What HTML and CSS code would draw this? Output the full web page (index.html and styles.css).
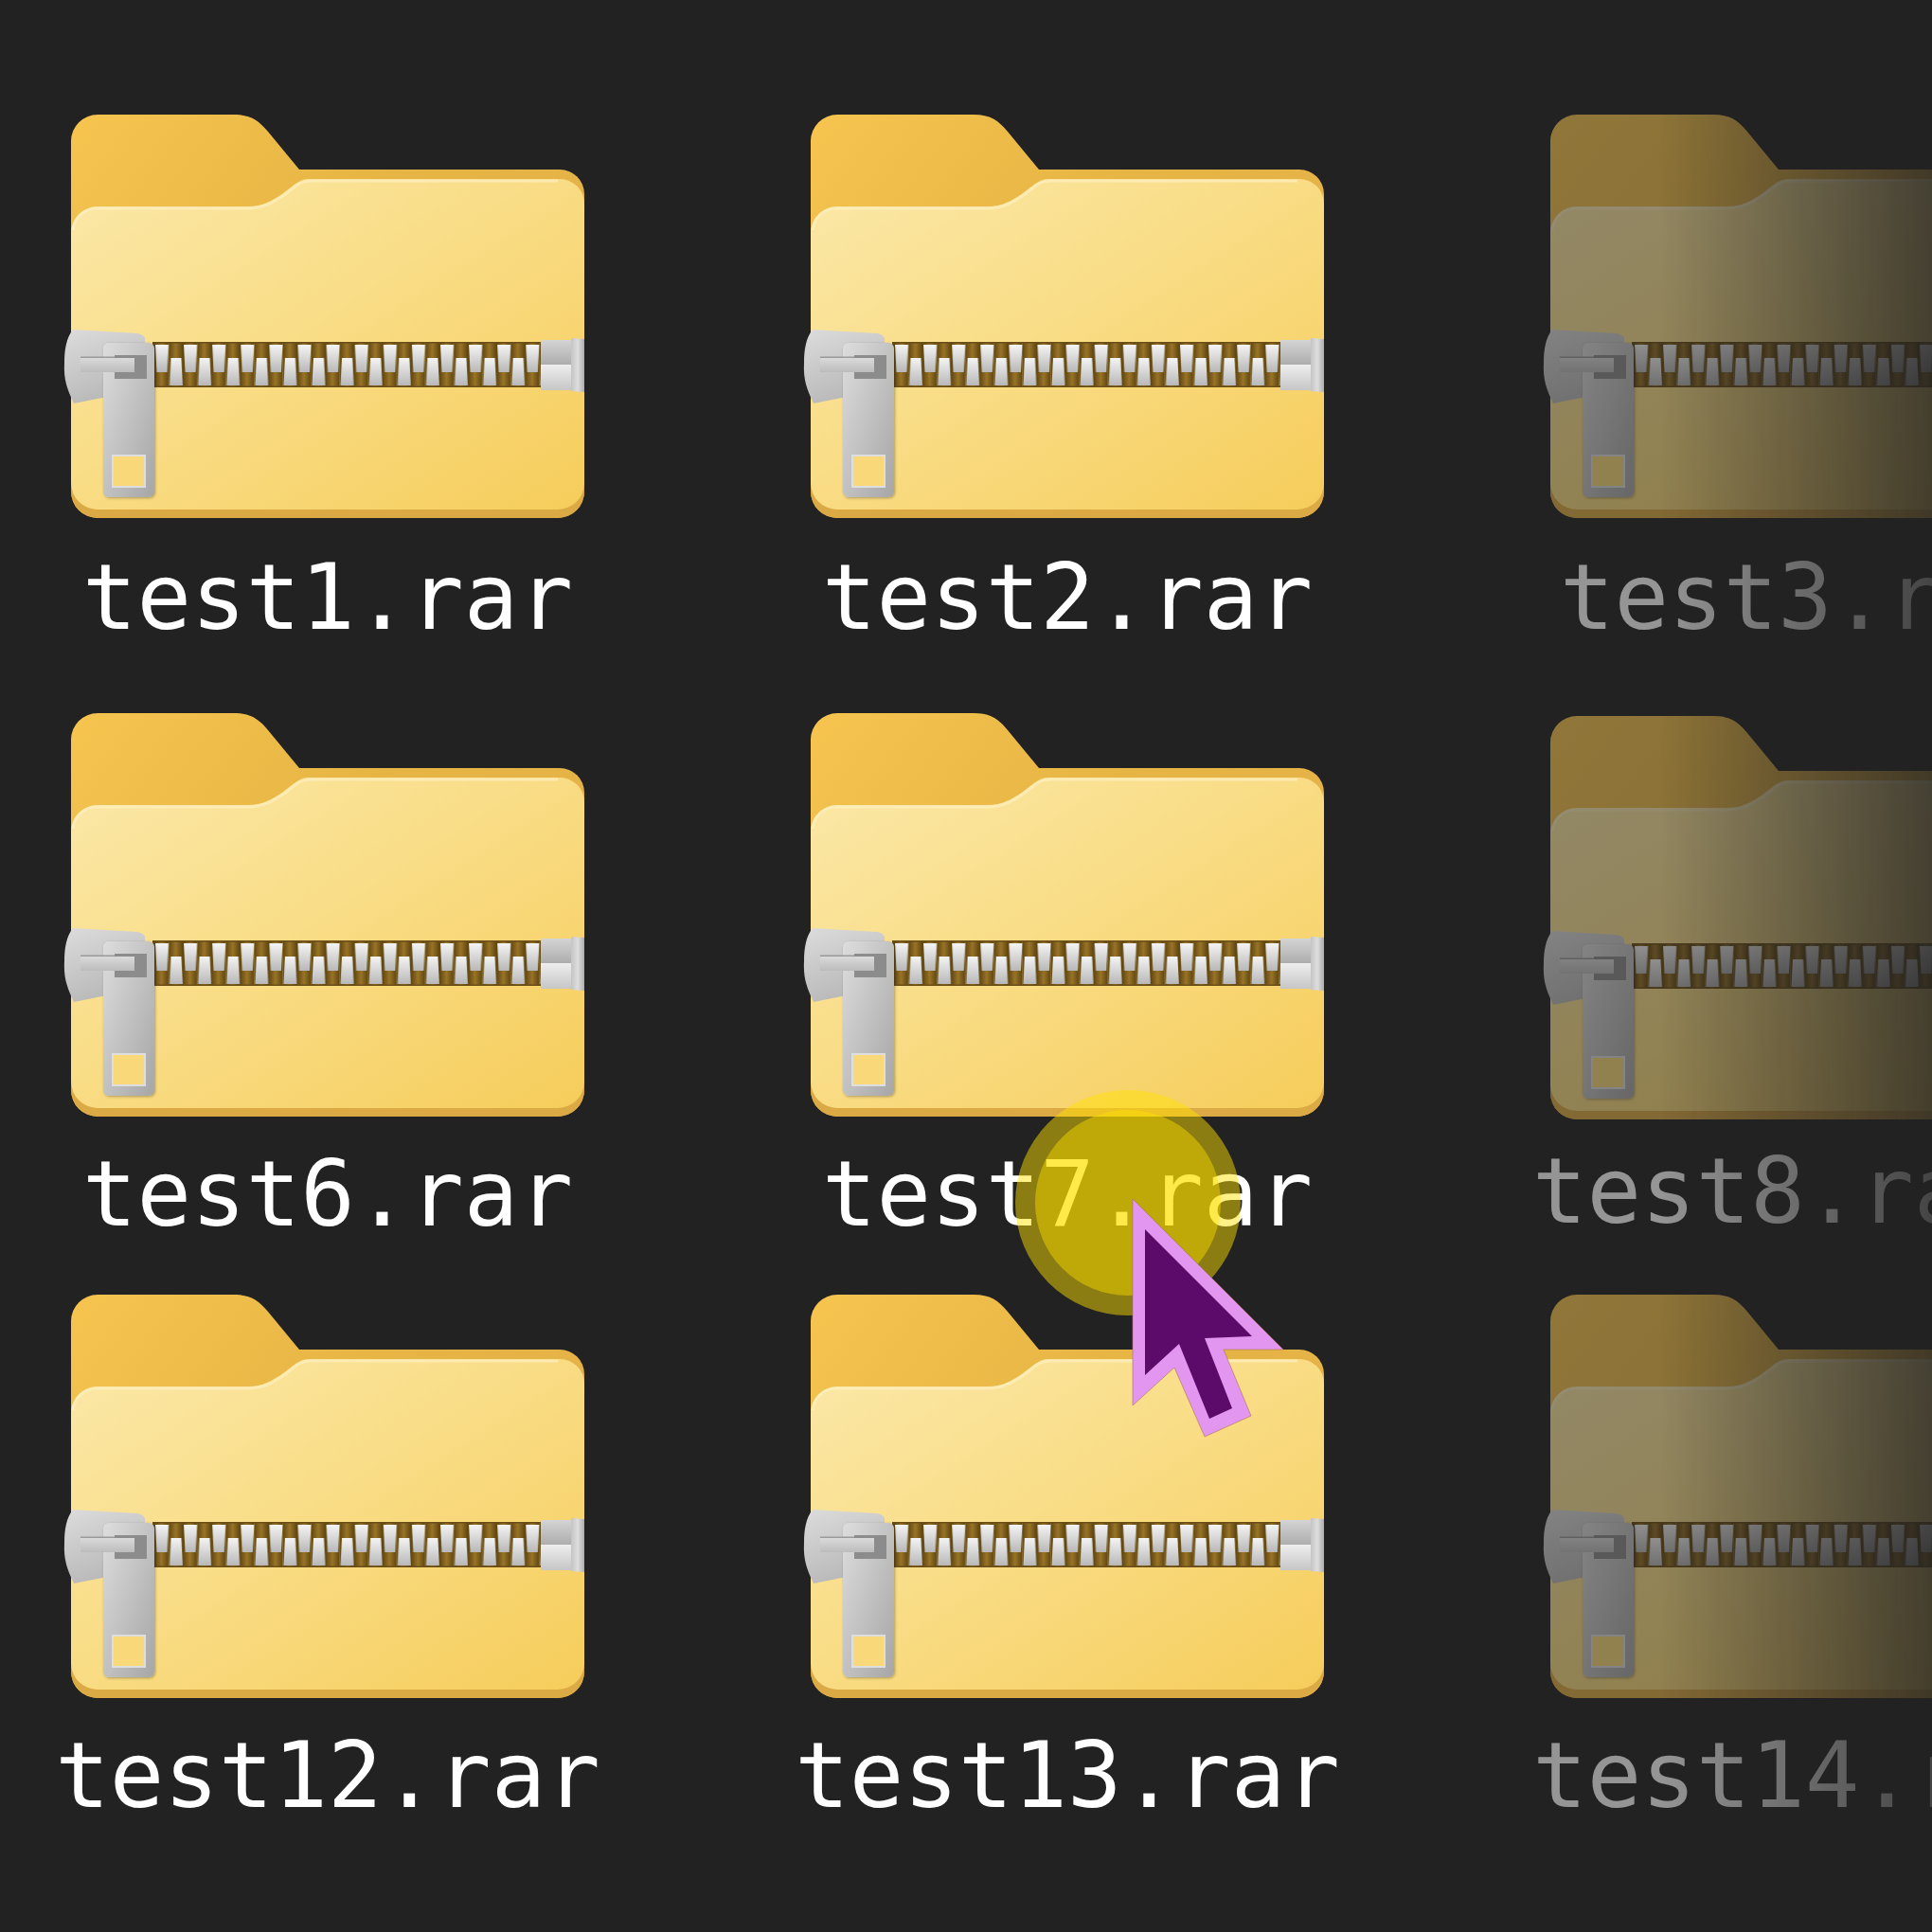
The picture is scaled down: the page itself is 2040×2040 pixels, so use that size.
FILE: index.html
```html
<!DOCTYPE html>
<html lang="en">
<head>
    <meta charset="UTF-8">
    <title>Archives</title>
    <link rel="stylesheet" href="styles.css">
</head>
<body>
    <svg class="defs" aria-hidden="true">
        <defs>
            <linearGradient id="backFill" x1="0" y1="0" x2="1" y2="0.6">
                <stop offset="0" stop-color="#f6c44f"/>
                <stop offset="0.5" stop-color="#e7b544"/>
                <stop offset="1" stop-color="#e3b148"/>
            </linearGradient>
            <linearGradient id="frontFill" x1="0" y1="0" x2="1" y2="1">
                <stop offset="0" stop-color="#fbe8a8"/>
                <stop offset="0.45" stop-color="#f9dd87"/>
                <stop offset="1" stop-color="#f6cd5b"/>
            </linearGradient>
            <linearGradient id="toothDown" x1="0" y1="0" x2="0" y2="1">
                <stop offset="0" stop-color="#f4f4f4"/>
                <stop offset="1" stop-color="#b8b8b8"/>
            </linearGradient>
            <linearGradient id="gap" x1="0" y1="0" x2="1" y2="0">
                <stop offset="0" stop-color="#5f450f"/>
                <stop offset="0.5" stop-color="#997428"/>
                <stop offset="1" stop-color="#5f450f"/>
            </linearGradient>
            <linearGradient id="metal" x1="0" y1="0" x2="1" y2="1">
                <stop offset="0" stop-color="#dddddd"/>
                <stop offset="1" stop-color="#a6a6a6"/>
            </linearGradient>
            <linearGradient id="bar" x1="0" y1="0" x2="0" y2="1">
                <stop offset="0" stop-color="#dadada"/>
                <stop offset="1" stop-color="#bcbcbc"/>
            </linearGradient>
            <linearGradient id="metalSide" x1="0" y1="0" x2="1" y2="0">
                <stop offset="0" stop-color="#c4c4c4"/>
                <stop offset="0.5" stop-color="#dedede"/>
                <stop offset="1" stop-color="#aeaeae"/>
            </linearGradient>
            <linearGradient id="stopTop" x1="0" y1="0" x2="0" y2="1">
                <stop offset="0" stop-color="#d4d4d4"/>
                <stop offset="1" stop-color="#adadad"/>
            </linearGradient>
            <linearGradient id="stopBottom" x1="0" y1="0" x2="0" y2="1">
                <stop offset="0" stop-color="#eeeeee"/>
                <stop offset="1" stop-color="#c6c6c6"/>
            </linearGradient>
            <linearGradient id="slider" x1="0" y1="0" x2="0.4" y2="1">
                <stop offset="0" stop-color="#dcdcdc"/>
                <stop offset="1" stop-color="#b8b8b8"/>
            </linearGradient>
            <filter id="pullShadow" x="-20%" y="-10%" width="140%" height="120%">
                <feDropShadow dx="1" dy="1" stdDeviation="1.5" flood-color="#000" flood-opacity="0.3"/>
            </filter>
            <pattern id="teeth" x="57.9" y="240" width="30.1" height="48" patternUnits="userSpaceOnUse">
                <rect width="15" height="48" fill="url(#gap)"/>
                <rect x="15" width="15.1" height="48" fill="url(#gap)"/>
                <path d="M1 3H15L13.5 32H2.5Z" fill="url(#toothDown)"/>
                <path d="M17.5 17H28.5L30 46H16Z" fill="url(#toothDown)"/>
            </pattern>
            <g id="rar">
                <path fill="url(#backFill)" d="M0 28A28 28 0 0 1 28 0H172C190 0 198 6 208 18L241 58H516A26 26 0 0 1 542 84V398A28 28 0 0 1 514 426H28A28 28 0 0 1 0 398Z"/>
                <path fill="#dcaa45" d="M0 390V398A28 28 0 0 0 28 426H514A28 28 0 0 0 542 398V390Z"/>
                <path fill="url(#frontFill)" d="M0 125A28 28 0 0 1 28 97H186C203 97 212 91 224 83C234 76 240 68 252 68H516A26 26 0 0 1 542 94V389A28 28 0 0 1 514 417H28A28 28 0 0 1 0 389Z"/>
                <path fill="none" stroke="#fdf0c0" stroke-width="3" stroke-opacity="0.7" d="M2 122A25 25 0 0 1 28 99H186C203 99 213 93 225 85C235 78 240 70 252 70H514"/>

                <rect x="86" y="240" width="411" height="48" fill="url(#teeth)"/>
                <rect x="86" y="240" width="411" height="1.5" fill="#6b4e16"/>
                <rect x="86" y="286.5" width="411" height="1.5" fill="#6b4e16"/>

                <path fill="url(#metalSide)" d="M528 236L542 237V293L528 292Z"/>
                <rect x="496" y="238" width="32" height="26" fill="url(#stopTop)"/>
                <rect x="496" y="264" width="32" height="27" fill="url(#stopBottom)"/>

                <path fill="url(#slider)" d="M2 227L70 231Q76 232 78 236V290L3 305C-4 290 -8 280 -7 262C-7 248 -5 236 2 227Z"/>
                <rect x="34" y="241" width="54" height="163" rx="6" fill="url(#metal)" filter="url(#pullShadow)"/>
                <rect x="46" y="254" width="34" height="25" fill="#8c8c8c"/>
                <rect x="10" y="257" width="57" height="15" fill="url(#bar)"/>
                <rect x="10" y="255.5" width="36" height="1.5" fill="#9a9a9a"/>
                <rect x="44" y="360" width="34" height="33" fill="#f8d878" stroke="#dedede" stroke-width="2"/>
            </g>
        </defs>
    </svg>

    <div class="grid">
        <div class="file">
            <svg class="icon" viewBox="0 0 542 426"><use href="#rar"/></svg>
            <div class="name">test1.rar</div>
        </div>
        <div class="file">
            <svg class="icon" viewBox="0 0 542 426"><use href="#rar"/></svg>
            <div class="name">test2.rar</div>
        </div>
        <div class="file fade">
            <svg class="icon" viewBox="0 0 542 426"><use href="#rar"/></svg>
            <div class="name">test3.rar</div>
        </div>
        <div class="file">
            <svg class="icon" viewBox="0 0 542 426"><use href="#rar"/></svg>
            <div class="name">test6.rar</div>
        </div>
        <div class="file">
            <svg class="icon" viewBox="0 0 542 426"><use href="#rar"/></svg>
            <div class="name">test7.rar</div>
        </div>
        <div class="file fade lagging">
            <svg class="icon" viewBox="0 0 542 426"><use href="#rar"/></svg>
            <div class="name">test8.rar</div>
        </div>
        <div class="file">
            <svg class="icon" viewBox="0 0 542 426"><use href="#rar"/></svg>
            <div class="name">test12.rar</div>
        </div>
        <div class="file">
            <svg class="icon" viewBox="0 0 542 426"><use href="#rar"/></svg>
            <div class="name">test13.rar</div>
        </div>
        <div class="file fade">
            <svg class="icon" viewBox="0 0 542 426"><use href="#rar"/></svg>
            <div class="name">test14.rar</div>
        </div>
    </div>

    <svg class="pointer" viewBox="0 0 2040 2040" aria-hidden="true">
        <circle class="halo" cx="1191" cy="1270" r="119"/>
        <circle class="halo-core" cx="1191" cy="1270" r="98"/>
        <path class="arrow-edge" d="M1196 1266V1484L1240 1444L1272 1517L1321 1495L1292 1425H1355Z"/>
        <path class="arrow-fill" d="M1209 1298V1452L1245 1419L1277 1498L1301 1487L1272 1413L1322 1411Z"/>
    </svg>
</body>
</html>
```

FILE: styles.css
```css
html, body {
    margin: 0;
    padding: 0;
    height: 100%;
}

body {
    position: relative;
    background: #222222;
    overflow: hidden;
    font-family: "DejaVu Sans Mono", "Liberation Mono", monospace;
}

.defs {
    position: absolute;
    width: 0;
    height: 0;
}

.grid {
    display: grid;
    grid-template-columns: repeat(3, 692px);
    grid-template-rows: 632px 614px 560px;
    column-gap: 89px;
    padding-top: 121px;
}

.file {
    display: flex;
    flex-direction: column;
    align-items: center;
}

.icon {
    display: block;
    width: 542px;
    height: 426px;
    overflow: visible;
    filter: blur(0.5px);
}

.name {
    margin-top: 26px;
    font-size: 95.6px;
    line-height: 112px;
    color: #fff;
    white-space: nowrap;
}

.file:nth-child(-n+3) .name {
    margin-top: 28px;
}

.fade {
    -webkit-mask-image: linear-gradient(to right, rgba(0, 0, 0, 0.52) 190px, rgba(0, 0, 0, 0.16) 478px);
    mask-image: linear-gradient(to right, rgba(0, 0, 0, 0.52) 190px, rgba(0, 0, 0, 0.16) 478px);
}

.fade .name {
    margin-right: 4px;
}

.lagging .icon {
    margin-top: 3px;
}

.lagging .name {
    margin-top: 20px;
    padding-right: 58px;
}

.pointer {
    position: absolute;
    top: 0;
    left: 0;
    width: 2040px;
    height: 2040px;
    pointer-events: none;
}

.halo {
    fill: rgba(255, 225, 0, 0.48);
}

.halo-core {
    fill: rgba(255, 225, 0, 0.44);
}

.arrow-edge {
    fill: #e296f0;
    stroke: #a9724f;
    stroke-width: 0.6;
}

.arrow-fill {
    fill: #5c0b6b;
}
```
